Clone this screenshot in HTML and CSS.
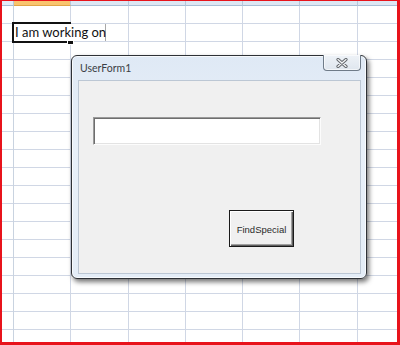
FILE: index.html
```html
<!DOCTYPE html>
<html>
<head>
<meta charset="utf-8">
<link rel="stylesheet" href="styles.css">
</head>
<body>
<div class="window">
  <div class="colheads">
    <div class="corner"></div>
    <div class="colhead w57 active"></div>
    <div class="colhead w58"></div>
    <div class="colhead w57"></div>
    <div class="colhead w57"></div>
    <div class="colhead w57"></div>
    <div class="colhead w58"></div>
    <div class="colhead rest"></div>
  </div>
  <div class="grid">
    <div class="col rowhead"></div>
    <div class="col w57"></div>
    <div class="col w58"></div>
    <div class="col w57"></div>
    <div class="col w57"></div>
    <div class="col w57"></div>
    <div class="col w58"></div>
    <div class="col rest"></div>
  </div>

  <div class="cell-sel"></div>
  <div class="cell-edit">I am working on</div>
  <div class="fill-handle"></div>

  <div class="dialog">
    <div class="titlebar">
      <span class="title">UserForm1</span>
      <div class="close">
        <svg width="12" height="10" viewBox="0 0 12 10">
          <path d="M2 1.5 L10 8.5 M10 1.5 L2 8.5" stroke="#5f6368" stroke-width="3.2" stroke-linecap="round" fill="none"/>
          <path d="M2 1.5 L10 8.5 M10 1.5 L2 8.5" stroke="#f4f6f8" stroke-width="1.3" stroke-linecap="round" fill="none"/>
        </svg>
      </div>
    </div>
    <div class="client">
      <div class="textbox"></div>
      <div class="button">FindSpecial</div>
    </div>
  </div>
</div>
</body>
</html>
```

FILE: styles.css
```css
html, body {
  margin: 0;
  padding: 0;
  background: #fff;
}

.window {
  position: relative;
  width: 400px;
  height: 345px;
  box-sizing: border-box;
  border-style: solid;
  border-color: #e8131b;
  border-width: 1px 3px 3px 2px;
  display: flex;
  flex-direction: column;
  overflow: hidden;
  background: #fff;
}

.colheads {
  display: flex;
  height: 5px;
  flex: none;
}

.corner,
.colhead {
  box-sizing: border-box;
  height: 5px;
  background: #dde7f3;
  border-right: 1px solid #b7c7da;
  border-bottom: 1px solid #a9bfd6;
}

.corner { width: 12px; background: #e4ecf6; }
.colhead.active { background: #f8c46e; border-bottom-color: #e1a546; }

.w57 { width: 57px; flex: none; }
.w58 { width: 58px; flex: none; }
.rest { flex: 1; border-right: none; }

.grid {
  display: flex;
  flex: 1;
}

.col {
  box-sizing: border-box;
  border-right: 1px solid #d0d7e5;
  background-image: repeating-linear-gradient(to bottom, #fff 0 17px, #d0d7e5 17px 18px);
}

.col.rowhead {
  width: 12px;
  flex: none;
  border-right: 1px solid #c9d3e0;
}

.col.rest { border-right: none; }

.cell-sel {
  position: absolute;
  left: 10px;
  top: 21px;
  width: 59px;
  height: 21px;
  box-sizing: border-box;
  border: 2px solid #111;
}

.cell-edit {
  position: absolute;
  left: 12px;
  top: 23px;
  width: 92px;
  height: 17px;
  box-sizing: border-box;
  background: #fff;
  border-right: 1px solid #a8a8a8;
  padding-left: 1px;
  font-family: Lato, "Liberation Sans", sans-serif;
  font-size: 13px;
  line-height: 17px;
  color: #111;
  white-space: nowrap;
}

.fill-handle {
  position: absolute;
  left: 65px;
  top: 40px;
  width: 5px;
  height: 3px;
  background: #111;
  border: 1px solid #fff;
  border-top: none;
}

.dialog {
  position: absolute;
  left: 69px;
  top: 54px;
  width: 296px;
  height: 224px;
  box-sizing: border-box;
  border: 1px solid #2e3136;
  border-radius: 6px;
  background: linear-gradient(to bottom, #dfe9f5, #e8f0f9 40%, #e4edf7);
  box-shadow: 2px 3px 5px rgba(0, 0, 0, 0.55), inset 0 0 0 1px rgba(255, 255, 255, 0.7);
  padding: 0 5px 4px 6px;
  display: flex;
  flex-direction: column;
}

.titlebar {
  height: 24px;
  flex: none;
  display: flex;
  justify-content: space-between;
  align-items: flex-start;
}

.title {
  padding: 6px 0 0 2px;
  font-family: Lato, "Liberation Sans", sans-serif;
  font-size: 10.5px;
  line-height: 12px;
  color: #3b3f45;
}

.close {
  margin-top: -1px;
  width: 38px;
  height: 16px;
  box-sizing: border-box;
  border: 1px solid #6f7b88;
  border-top: none;
  border-radius: 0 0 4px 4px;
  background: linear-gradient(to bottom, #eef2f7, #dfe6ee);
  box-shadow: inset 0 0 0 1px rgba(255, 255, 255, 0.6);
  display: flex;
  align-items: center;
  justify-content: center;
}

.close svg { display: block; margin-top: 1px; }

.client {
  flex: 1;
  box-sizing: border-box;
  border: 1px solid #bcc7d4;
  background: #f0f0f0;
  padding: 36px 0 0 14px;
  display: flex;
  flex-direction: column;
  align-items: flex-start;
}

.textbox {
  width: 228px;
  height: 28px;
  box-sizing: border-box;
  background: #fff;
  border: 1px solid;
  border-color: #9a9a9a #fcfcfc #fcfcfc #9a9a9a;
  box-shadow: inset 1px 1px 0 #6e6e6e, inset -1px -1px 0 #e3e3e3;
}

.button {
  margin: 65px 0 0 136px;
  width: 65px;
  height: 37px;
  box-sizing: border-box;
  border: 1px solid #1a1a1a;
  background: #f0f0f0;
  box-shadow: inset 1px 1px 0 #fff, inset -1px -1px 0 #5e5e5e, inset -2px -2px 0 #a0a0a0;
  display: flex;
  align-items: center;
  justify-content: center;
  padding-top: 2px;
  font-family: "Liberation Sans", Lato, sans-serif;
  font-size: 9.5px;
  color: #2a2a2a;
}
```
